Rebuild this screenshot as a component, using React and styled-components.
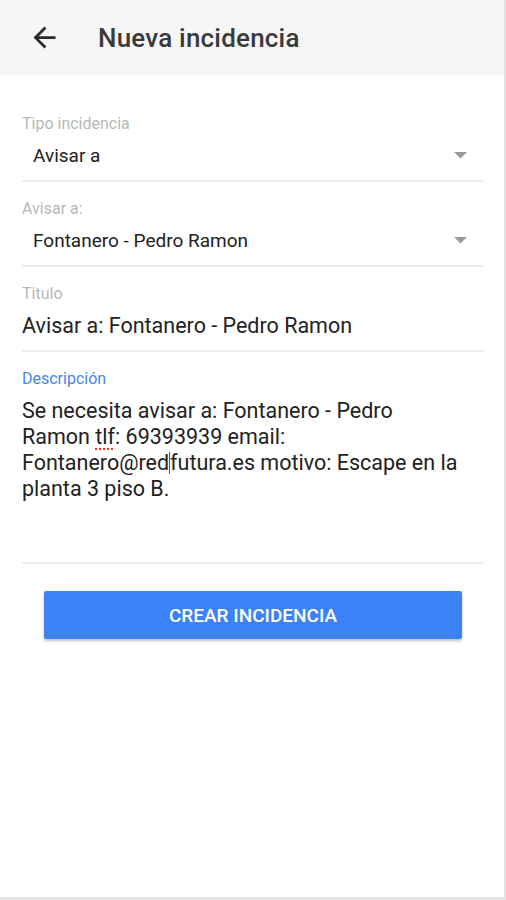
import styled, { createGlobalStyle } from 'styled-components'

const GlobalStyle = createGlobalStyle`
  html, body {
    margin: 0;
    padding: 0;
    background: #ffffff;
  }
  body {
    font-family: Roboto, "Noto Sans", "Liberation Sans", sans-serif;
  }
`

const ArrowIcon = () => (
  <svg width="33" height="33" viewBox="0 0 24 24">
    <path d="M20 11H7.83l5.59-5.59L12 4l-8 8 8 8 1.41-1.41L7.83 13H20v-2z" fill="#2b2b2b" />
  </svg>
)

const Caret = () => (
  <svg width="13" height="7" viewBox="0 0 13 7">
    <path d="M0 0h13L6.5 6.5z" fill="#9a9a9a" />
  </svg>
)

const SelectField = ({ label, value, first }) => (
  <S.Field $first={first}>
    <S.Label>{label}</S.Label>
    <S.SelectRow>
      <S.SelectValue>{value}</S.SelectValue>
      <Caret />
    </S.SelectRow>
  </S.Field>
)

const App = () => (
  <>
    <GlobalStyle />
    <S.Screen>
      <S.Header>
        <S.Back><ArrowIcon /></S.Back>
        <S.Title>Nueva incidencia</S.Title>
      </S.Header>
      <S.Form>
        <SelectField first label="Tipo incidencia" value="Avisar a" />
        <SelectField label="Avisar a:" value="Fontanero - Pedro Ramon" />
        <S.Field>
          <S.Label>Titulo</S.Label>
          <S.InputValue>Avisar a: Fontanero - Pedro Ramon</S.InputValue>
        </S.Field>
        <S.Field $tall>
          <S.Label $active>Descripción</S.Label>
          <S.TextArea>
            Se necesita avisar a: Fontanero - Pedro Ramon <S.Typo>tlf</S.Typo>: 69393939 email:{' '}
            <S.Word>Fontanero@red<S.Caret />futura.es</S.Word> motivo: Escape en la planta 3 piso B.
          </S.TextArea>
        </S.Field>
        <S.Submit>Crear incidencia</S.Submit>
      </S.Form>
    </S.Screen>
  </>
)

export default App

const S = {
  Screen: styled.div`
    width: 504px;
    height: 897px;
    border-right: 2px solid #e2e2e2;
    border-bottom: 3px solid #e6e6e6;
    background: #fff;
    overflow: hidden;
  `,
  Header: styled.div`
    height: 75px;
    background: #f6f6f6;
    display: flex;
    align-items: center;
    padding-left: 28px;
    box-sizing: border-box;
  `,
  Back: styled.div`
    width: 33px;
    height: 33px;
    display: flex;
    margin-right: 37px;
  `,
  Title: styled.div`
    font-size: 26px;
    font-weight: 500;
    color: #3a3a3a;
    letter-spacing: 0.2px;
  `,
  Form: styled.div`
    padding: 0 20px 0 22px;
    display: flex;
    flex-direction: column;
  `,
  Field: styled.div`
    border-bottom: 2px solid #ececec;
    padding-top: ${(p) => (p.$first ? 40 : 18)}px;
    height: ${(p) => (p.$tall ? 192 : 65)}px;
  `,
  Label: styled.div`
    font-size: 16px;
    line-height: 18px;
    color: ${(p) => (p.$active ? '#4a86e8' : '#b8b8b8')};
  `,
  SelectRow: styled.div`
    display: flex;
    align-items: center;
    justify-content: space-between;
    margin-top: 8px;
    padding: 0 17px 0 11px;
    height: 28px;
  `,
  SelectValue: styled.div`
    font-size: 19px;
    color: #222;
  `,
  InputValue: styled.div`
    font-size: 21.5px;
    color: #222;
    margin-top: 10px;
    line-height: 26px;
  `,
  TextArea: styled.div`
    font-size: 21.5px;
    line-height: 26px;
    color: #222;
    margin-top: 10px;
    width: 440px;
  `,
  Word: styled.span`
    white-space: nowrap;
  `,
  Typo: styled.span`
    text-decoration: underline dotted #e53935;
    text-underline-offset: 4px;
  `,
  Caret: styled.span`
    display: inline-block;
    width: 1px;
    height: 22px;
    background: #555;
    vertical-align: -4px;
  `,
  Submit: styled.button`
    margin: 27px 22px 0 22px;
    height: 48px;
    background: #3b82f6;
    border: none;
    border-radius: 2px;
    color: #fff;
    font-family: Roboto, "Liberation Sans", sans-serif;
    font-size: 19px;
    font-weight: 500;
    text-transform: uppercase;
    box-shadow: 0 2px 3px rgba(0, 0, 0, 0.25);
  `
}
